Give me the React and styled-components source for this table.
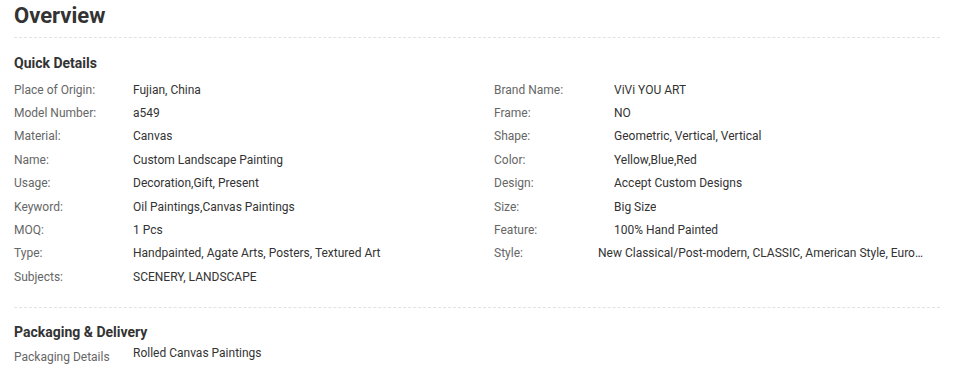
import styled, { createGlobalStyle } from 'styled-components'

const Global = createGlobalStyle`
  html, body {
    margin: 0;
    background: #ffffff;
    font-family: Roboto, "Liberation Sans", Arial, sans-serif;
  }
`

const Page = styled.div`
  width: 954px;
  min-height: 371px;
  padding: 0 14px 20px;
  box-sizing: border-box;
`
const Title = styled.h2`
  margin: 0;
  padding-top: 3px;
  height: 34px;
  font-size: 22px;
  line-height: 26px;
  font-weight: 700;
  color: #333333;
  border-bottom: 1px dashed #e2e2e2;
  width: 926px;
`
const Section = styled.div`
  padding: ${(p) => p.$top || 16}px 0 ${(p) => p.$bottom || 0}px;
  border-bottom: ${(p) => (p.$line ? '1px dashed #e2e2e2' : 'none')};
  width: 926px;
`
const Heading = styled.h3`
  margin: 0 0 ${(p) => p.$gap || 6}px;
  font-size: 14px;
  line-height: 18px;
  font-weight: 700;
  color: #333333;
`
const Grid = styled.div`
  display: grid;
  grid-template-columns: 480px 446px;
  grid-auto-rows: 23.375px;
`
const Row = styled.div`
  display: flex;
  align-items: ${(p) => (p.$top ? 'flex-start' : 'center')};
  font-size: 12px;
  line-height: 16px;
  min-width: 0;
`
const Label = styled.span`
  flex: 0 0 ${(p) => p.$w || 119}px;
  color: #666666;
  padding-top: ${(p) => p.$drop || 0}px;
`
const Value = styled.span`
  color: #333333;
  white-space: nowrap;
  overflow: hidden;
  text-overflow: ellipsis;
  margin-left: ${(p) => p.$shift || 0}px;
  max-width: ${(p) => p.$max || 320}px;
`

const left = [
  ['Place of Origin:', 'Fujian, China'],
  ['Model Number:', 'a549'],
  ['Material:', 'Canvas'],
  ['Name:', 'Custom Landscape Painting'],
  ['Usage:', 'Decoration,Gift, Present'],
  ['Keyword:', 'Oil Paintings,Canvas Paintings'],
  ['MOQ:', '1 Pcs'],
  ['Type:', 'Handpainted, Agate Arts, Posters, Textured Art'],
  ['Subjects:', 'SCENERY, LANDSCAPE'],
]

const right = [
  ['Brand Name:', 'ViVi YOU ART'],
  ['Frame:', 'NO'],
  ['Shape:', 'Geometric, Vertical, Vertical'],
  ['Color:', 'Yellow,Blue,Red'],
  ['Design:', 'Accept Custom Designs'],
  ['Size:', 'Big Size'],
  ['Feature:', '100% Hand Painted'],
  ['Style:', 'New Classical/Post-modern, CLASSIC, American Style, European Style, Chinese Style'],
]

export default function App() {
  const rows = []
  left.forEach((l, i) => {
    const r = right[i]
    const isStyle = r && r[0] === 'Style:'
    rows.push(
      <Row key={'l' + i}>
        <Label>{l[0]}</Label>
        <Value>{l[1]}</Value>
      </Row>
    )
    rows.push(
      <Row key={'r' + i}>
        {r && <Label $w={120}>{r[0]}</Label>}
        {r && (
          <Value $shift={isStyle ? -16 : 0} $max={isStyle ? 331 : 320}>
            {r[1]}
          </Value>
        )}
      </Row>
    )
  })

  return (
    <Page>
      <Global />
      <Title>Overview</Title>
      <Section $line $bottom={19}>
        <Heading>Quick Details</Heading>
        <Grid>{rows}</Grid>
      </Section>
      <Section $top={15}>
        <Heading $gap={4}>Packaging &amp; Delivery</Heading>
        <Row $top>
          <Label $drop={4}>Packaging Details</Label>
          <Value>Rolled Canvas Paintings</Value>
        </Row>
      </Section>
    </Page>
  )
}
